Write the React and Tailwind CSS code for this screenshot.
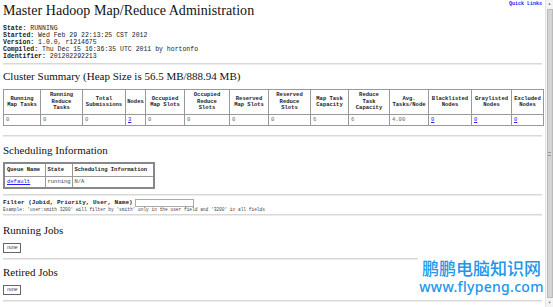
import React from "react";

const cols = [
  { w: 37, h: ["Running", "Map Tasks"], v: "0" },
  { w: 42, h: ["Running", "Reduce", "Tasks"], v: "0" },
  { w: 43, h: ["Total", "Submissions"], v: "0" },
  { w: 20, h: ["Nodes"], v: "3", link: true },
  { w: 39, h: ["Occupied", "Map Slots"], v: "0" },
  { w: 45, h: ["Occupied", "Reduce", "Slots"], v: "0" },
  { w: 39, h: ["Reserved", "Map Slots"], v: "0" },
  { w: 42, h: ["Reserved", "Reduce", "Slots"], v: "0" },
  { w: 38, h: ["Map Task", "Capacity"], v: "6" },
  { w: 41, h: ["Reduce", "Task", "Capacity"], v: "6" },
  { w: 39, h: ["Avg.", "Tasks/Node"], v: "4.00" },
  { w: 43, h: ["Blacklisted", "Nodes"], v: "0", link: true },
  { w: 40, h: ["Graylisted", "Nodes"], v: "0", link: true },
  { w: 32, h: ["Excluded", "Nodes"], v: "0", link: true },
];

function Hr() {
  return <div className="h-[2px] bg-[#d8d8d8] border-b border-[#ececec]" />;
}

function H2({ children, className = "" }) {
  return (
    <div className={`font-['Liberation_Serif','Times_New_Roman',serif] text-[11px] leading-[10px] tracking-[0px] text-[#111] whitespace-nowrap ${className}`}>
      {children}
    </div>
  );
}

function NoneBox({ className = "" }) {
  return (
    <div className={`w-[18px] h-[10px] border border-[#666] flex items-center justify-center ${className}`}>
      <span className="text-[5px] italic leading-none text-[#444] tracking-[-0.5px]">none</span>
    </div>
  );
}

export default function App() {
  return (
    <div className="w-[553px] h-[307px] relative overflow-hidden bg-white flex font-['Liberation_Mono','Courier_New',monospace]">
      <div className="w-[545px] px-[3px] flex flex-col text-[#222]">
        <div className="relative h-[20px]">
          <div className="pt-[4px] font-['Liberation_Serif','Times_New_Roman',serif] text-[14px] leading-[14px] tracking-[0.05px] text-[#111] whitespace-nowrap">
            Master Hadoop Map/Reduce Administration
          </div>
          <div className="absolute right-0 top-[1px] text-[5px] leading-[6px] font-bold text-[#1a1aff]">
            Quick Links
          </div>
        </div>
        <div className="mt-[5px] text-[6.5px] leading-[7px]">
          <div><b>State:</b> RUNNING</div>
          <div><b>Started:</b> Wed Feb 29 22:13:25 CST 2012</div>
          <div><b>Version:</b> 1.0.0, r1214675</div>
          <div><b>Compiled:</b> Thu Dec 15 16:36:35 UTC 2011 by hortonfo</div>
          <div><b>Identifier:</b> 201202292213</div>
        </div>
        <div className="mt-[3px]"><Hr /></div>
        <H2 className="mt-[6px]">Cluster Summary (Heap Size is 56.5 MB/888.94 MB)</H2>
        <table className="mt-[8px] border-collapse border border-[#777] w-[540px] table-fixed">
          <colgroup>
            {cols.map((c, i) => (
              <col key={i} style={{ width: c.w }} />
            ))}
          </colgroup>
          <tbody>
            <tr className="h-[25px]">
              {cols.map((c, i) => (
                <th key={i} className="border border-[#999] p-0 text-center align-middle font-bold text-[5.5px] leading-[6.5px] text-[#222]">
                  {c.h.map((l, j) => (
                    <div key={j} className="whitespace-nowrap">{l}</div>
                  ))}
                </th>
              ))}
            </tr>
            <tr className="h-[11px]">
              {cols.map((c, i) => (
                <td key={i} className="border border-[#999] px-[2px] py-0 text-left text-[5.5px] leading-[6px] text-[#666]">
                  {c.link ? <span className="text-[#2020ee] underline">{c.v}</span> : c.v}
                </td>
              ))}
            </tr>
          </tbody>
        </table>
        <div className="mt-[9px]"><Hr /></div>
        <H2 className="mt-[8px]">Scheduling Information</H2>
        <table className="mt-[7px] border-collapse border-2 border-[#888] w-[150px] table-fixed">
          <colgroup>
            <col style={{ width: 41 }} />
            <col style={{ width: 27 }} />
            <col style={{ width: 82 }} />
          </colgroup>
          <tbody>
            <tr className="h-[13px]">
              {["Queue Name", "State", "Scheduling Information"].map((t) => (
                <th key={t} className="border border-[#999] px-[2px] py-0 text-left font-bold text-[5.5px] leading-[6px] whitespace-nowrap">{t}</th>
              ))}
            </tr>
            <tr className="h-[12px]">
              <td className="border border-[#999] px-[2px] py-0 text-[5.5px] leading-[6px]"><span className="text-[#2020ee] underline">default</span></td>
              <td className="border border-[#999] px-[2px] py-0 text-[5.5px] leading-[6px] text-[#444]">running</td>
              <td className="border border-[#999] px-[2px] py-0 text-[5.5px] leading-[6px] text-[#444]">N/A</td>
            </tr>
          </tbody>
        </table>
        <div className="mt-[5px]"><Hr /></div>
        <div className="mt-[2px] flex items-center h-[9px]">
          <span className="font-bold text-[6px] leading-[7px] text-[#222] whitespace-nowrap">Filter (Jobid, Priority, User, Name)</span>
          <div className="ml-[2px] w-[59px] h-[8px] border border-[#aaa] bg-white" />
        </div>
        <div className="text-[4.5px] leading-[6px] text-[#444] whitespace-nowrap">
          Example: 'user:smith 3200' will filter by 'smith' only in the user field and '3200' in all fields
        </div>
        <div className="mt-[1px]"><Hr /></div>
        <H2 className="mt-[9px]">Running Jobs</H2>
        <NoneBox className="mt-[8px]" />
        <div className="mt-[5px]"><Hr /></div>
        <H2 className="mt-[7px]">Retired Jobs</H2>
        <NoneBox className="mt-[8px]" />
        <div className="mt-[5px]"><Hr /></div>
      </div>
      <div className="w-[8px] h-full bg-[#f4f4f4] border-l border-[#e4e4e4] flex flex-col items-center">
        <div className="w-[7px] h-[8px] flex items-center justify-center text-[5px] leading-none text-[#666]">▴</div>
        <div className="w-[6px] flex-1 bg-[#d4d4d4] border border-[#bbb] my-[1px] flex items-center justify-center">
          <div className="w-[3px] h-[4px] border-y border-[#999]" />
        </div>
        <div className="w-[7px] h-[8px] flex items-center justify-center text-[5px] leading-none text-[#666]">▾</div>
      </div>
      <div className="absolute left-[418px] top-[256px] w-[127px] h-[44px] bg-white flex flex-col items-center pt-[4px] font-['Noto_Sans_CJK_SC','Noto_Sans',sans-serif] text-[#2196e8]">
        <div className="text-[17px] leading-[16px] font-medium">鹏鹏电脑知识网</div>
        <div className="mt-[4px] text-[14px] leading-[13px] font-medium font-['Noto_Sans',sans-serif] tracking-[0.3px]">www.flypeng.com</div>
      </div>
    </div>
  );
}
